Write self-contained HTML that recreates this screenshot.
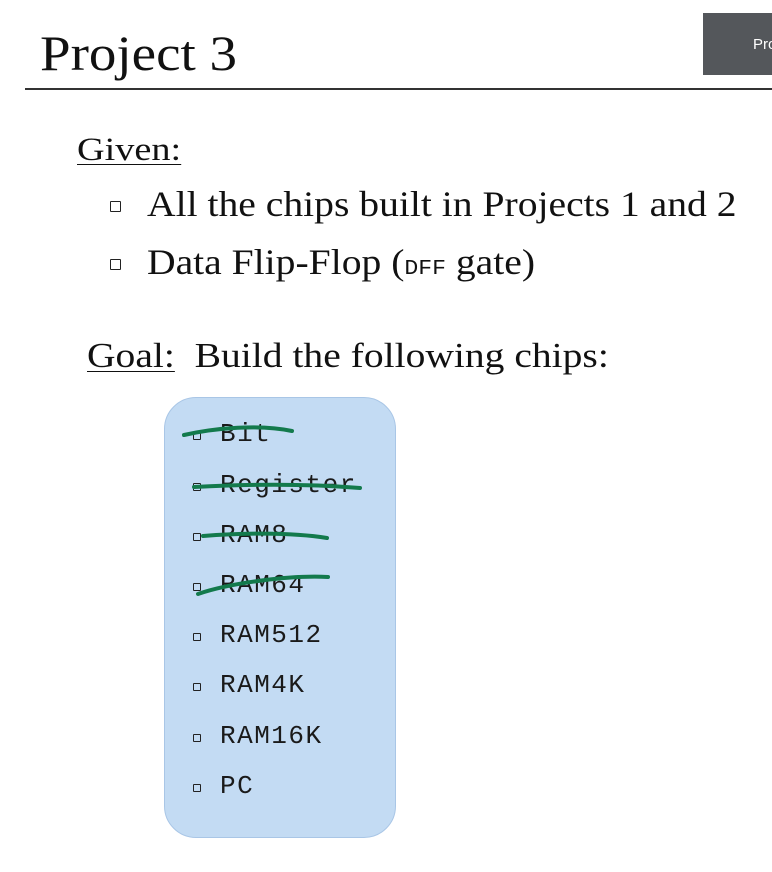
<!DOCTYPE html>
<html><head><style>
body{margin:0;width:772px;height:872px;background:#fff;position:relative;overflow:hidden;font-family:"Liberation Serif",serif;color:#111}
.a{position:absolute;white-space:nowrap;line-height:1;transform-origin:0 0}
.sq{position:absolute;width:9px;height:9px;border:1.5px solid #222;border-radius:1px;background:#fff}
.ssq{position:absolute;width:6px;height:6px;border:1.5px solid #222;border-radius:1px}
.m{position:absolute;font-family:"Liberation Mono",monospace;font-size:26px;line-height:1;color:#1a1a1a;letter-spacing:1.5px}
</style></head><body>
<div class="a" style="left:40px;top:28px;font-size:50px;transform:scaleX(1.1)">Project 3</div>
<div style="position:absolute;left:25px;top:88px;width:747px;height:2px;background:#333"></div>
<div style="position:absolute;left:703px;top:13px;width:69px;height:62px;background:#54575b"></div>
<div class="a" style="left:753px;top:37px;font-size:15px;color:#fff;font-family:'Liberation Sans',sans-serif">Pro</div>

<div class="a" style="left:77px;top:134px;font-size:33px;transform:scaleX(1.16)"><span style="text-decoration:underline;text-decoration-thickness:1px;text-underline-offset:4px">Given:</span></div>
<div class="sq" style="left:110px;top:201px"></div>
<div class="a" style="left:147px;top:186px;font-size:36px;transform:scaleX(1.1)">All the chips built in Projects 1 and 2</div>
<div class="sq" style="left:110px;top:259px"></div>
<div class="a" style="left:147px;top:244px;font-size:36px;transform:scaleX(1.1)">Data Flip-Flop (<span style="font-family:'Liberation Mono',monospace;font-size:21px">DFF</span> gate)</div>

<div class="a" style="left:87px;top:338px;font-size:35px;transform:scaleX(1.13)"><span style="text-decoration:underline;text-decoration-thickness:1px;text-underline-offset:4px">Goal:</span>&nbsp; Build the following chips:</div>

<div style="position:absolute;left:164px;top:397px;width:230px;height:439px;background:#c3dbf3;border:1.5px solid #a9c6e6;border-radius:32px"></div>

<div class="ssq" style="left:193px;top:432px"></div><div class="m" style="left:220px;top:421px">Bit</div>
<div class="ssq" style="left:193px;top:483px"></div><div class="m" style="left:220px;top:472px">Register</div>
<div class="ssq" style="left:193px;top:533px"></div><div class="m" style="left:220px;top:522px">RAM8</div>
<div class="ssq" style="left:193px;top:583px"></div><div class="m" style="left:220px;top:572px">RAM64</div>
<div class="ssq" style="left:193px;top:633px"></div><div class="m" style="left:220px;top:622px">RAM512</div>
<div class="ssq" style="left:193px;top:683px"></div><div class="m" style="left:220px;top:672px">RAM4K</div>
<div class="ssq" style="left:193px;top:734px"></div><div class="m" style="left:220px;top:723px">RAM16K</div>
<div class="ssq" style="left:193px;top:784px"></div><div class="m" style="left:220px;top:773px">PC</div>

<svg style="position:absolute;left:0;top:0" width="772" height="872">
<g fill="none" stroke="#137a4c" stroke-width="4" stroke-linecap="round">
<path d="M184 435 C215 428 260 424 292 431"/>
<path d="M194 487 C250 484 310 484 360 488"/>
<path d="M203 536 C240 533 290 532 327 538"/>
<path d="M198 594 C230 583 290 575 328 577"/>
</g></svg>
</body></html>
